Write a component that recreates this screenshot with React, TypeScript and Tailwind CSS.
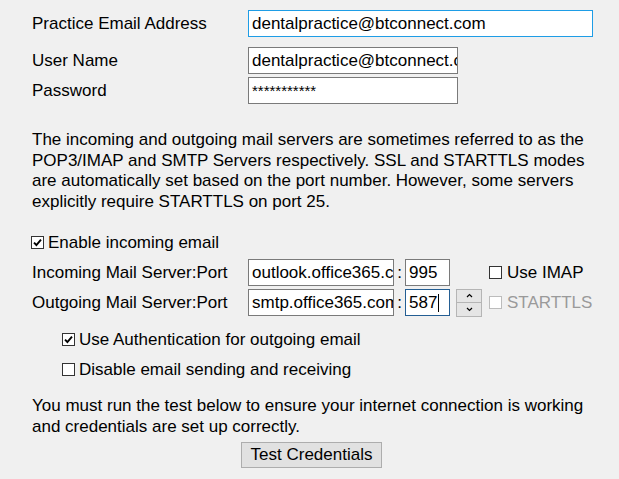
import React from "react";

function Check({ checked = false, disabled = false }: { checked?: boolean; disabled?: boolean }) {
  return (
    <span
      className={`w-[13px] h-[13px] border bg-white flex items-center justify-center shrink-0 ${
        disabled ? "border-[#bcbcbc]" : "border-[#333333]"
      }`}
    >
      {checked && (
        <svg width="9" height="9" viewBox="0 0 9 9">
          <path d="M1 4.6 L3.4 7 L8 1.6" stroke="#000" strokeWidth="1.9" fill="none" />
        </svg>
      )}
    </span>
  );
}

function Box({
  children,
  className,
}: {
  children?: React.ReactNode;
  className: string;
}) {
  return (
    <div
      className={`h-[27px] border bg-white pl-[3px] overflow-hidden whitespace-nowrap leading-[25px] shrink-0 ${className}`}
    >
      {children}
    </div>
  );
}

export default function App() {
  return (
    <div className="w-[619px] h-[479px] bg-[#f0f0f0] pl-[32px] pt-[10px] text-[17px] text-black font-['Liberation_Sans',Arial,sans-serif] overflow-hidden">
      <div className="flex h-[27px] items-center">
        <div className="w-[216px] leading-[27px]">Practice Email Address</div>
        <Box className="w-[345px] border-[#1e9de6]">dentalpractice@btconnect.com</Box>
      </div>
      <div className="flex h-[27px] items-center mt-[10px]">
        <div className="w-[216px] leading-[27px]">User Name</div>
        <Box className="w-[210px] border-[#7a7a7a]">dentalpractice@btconnect.com</Box>
      </div>
      <div className="flex h-[27px] items-center mt-[3px]">
        <div className="w-[216px] leading-[27px]">Password</div>
        <Box className="w-[210px] border-[#7a7a7a] text-[15px]">***********</Box>
      </div>

      <p className="mt-[26px] leading-[20.5px] whitespace-nowrap">
        The incoming and outgoing mail servers are sometimes referred to as the
        <br />
        POP3/IMAP and SMTP Servers respectively. SSL and STARTTLS modes
        <br />
        are automatically set based on the port number. However, some servers
        <br />
        explicitly require STARTTLS on port 25.
      </p>

      <div className="mt-[21px] h-[19px] flex items-center gap-[4px] -ml-[1px]">
        <Check checked />
        <span className="leading-[19px]">Enable incoming email</span>
      </div>

      <div className="mt-[7px] flex h-[27px] items-center">
        <div className="w-[216px] leading-[27px]">Incoming Mail Server:Port</div>
        <Box className="w-[146px] border-[#7a7a7a]">outlook.office365.com</Box>
        <div className="w-[11px] text-center leading-[27px]">:</div>
        <Box className="w-[45px] border-[#7a7a7a]">995</Box>
        <div className="w-[39px] shrink-0" />
        <div className="flex items-center gap-[5px]">
          <Check />
          <span className="leading-[19px]">Use IMAP</span>
        </div>
      </div>

      <div className="mt-[3px] flex h-[27px] items-center">
        <div className="w-[216px] leading-[27px]">Outgoing Mail Server:Port</div>
        <Box className="w-[146px] border-[#7a7a7a]">smtp.office365.com</Box>
        <div className="w-[11px] text-center leading-[27px]">:</div>
        <Box className="w-[45px] border-[#245e93] flex items-center">
          <span className="leading-[25px]">587</span>
          <span className="w-[1px] h-[18px] bg-black ml-[1px]" />
        </Box>
        <div className="ml-[6px] w-[26px] h-[28px] flex flex-col shrink-0">
          <div className="h-[14px] border border-[#b5b5b5] bg-[#e5e5e5] flex items-center justify-center">
            <svg width="7" height="5" viewBox="0 0 7 5">
              <path d="M1 4 L3.5 1.5 L6 4" stroke="#000" strokeWidth="1.2" fill="none" />
            </svg>
          </div>
          <div className="h-[14px] border border-t-0 border-[#b5b5b5] bg-[#e5e5e5] flex items-center justify-center">
            <svg width="7" height="5" viewBox="0 0 7 5">
              <path d="M1 1 L3.5 3.5 L6 1" stroke="#000" strokeWidth="1.2" fill="none" />
            </svg>
          </div>
        </div>
        <div className="ml-[7px] flex items-center gap-[5px]">
          <Check disabled />
          <span className="leading-[19px] text-[#9a9a9a]">STARTTLS</span>
        </div>
      </div>

      <div className="mt-[14px] pl-[30px] h-[19px] flex items-center gap-[4px]">
        <Check checked />
        <span className="leading-[19px]">Use Authentication for outgoing email</span>
      </div>
      <div className="mt-[11px] pl-[30px] h-[19px] flex items-center gap-[4px]">
        <Check />
        <span className="leading-[19px]">Disable email sending and receiving</span>
      </div>

      <p className="mt-[17px] leading-[20.5px] whitespace-nowrap">
        You must run the test below to ensure your internet connection is working
        <br />
        and credentials are set up correctly.
      </p>

      <div className="mt-[5px] ml-[209px] w-[141px] h-[26px] border border-[#adadad] bg-[#e1e1e1] flex items-center justify-center leading-[24px]">
        Test Credentials
      </div>
    </div>
  );
}
